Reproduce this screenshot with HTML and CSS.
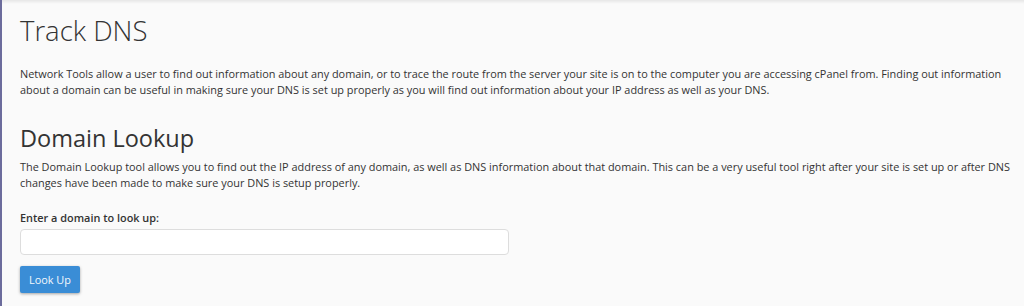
FILE: index.html
```html
<!DOCTYPE html>
<html lang="en">
<head>
    <meta charset="UTF-8">
    <meta name="viewport" content="width=device-width, initial-scale=1.0">
    <title>Track DNS</title>
    <link rel="stylesheet" href="styles.css">
</head>
<body>

    <div class="page">
        <!-- Page Header -->
        <h1 class="page-title">Track DNS</h1>
        <p class="intro">Network Tools allow a user to find out information about any domain, or to trace the route from the server your site is on to the computer you are accessing cPanel from. Finding out information about a domain can be useful in making sure your DNS is set up properly as you will find out information about your IP address as well as your DNS.</p>

        <!-- Domain Lookup -->
        <section class="lookup">
            <h2 class="section-title">Domain Lookup</h2>
            <p class="section-desc">The Domain Lookup tool allows you to find out the IP address of any domain, as well as DNS information about that domain. This can be a very useful tool right after your site is set up or after DNS changes have been made to make sure your DNS is setup properly.</p>

            <form class="lookup-form" onsubmit="return false;">
                <label class="field-label" for="domain">Enter a domain to look up:</label>
                <input class="field-input" type="text" id="domain">
                <button class="btn-primary" type="submit">Look Up</button>
            </form>
        </section>
    </div>

</body>
</html>
```

FILE: styles.css
```css
/* Base Reset */
* {
    margin: 0;
    padding: 0;
    box-sizing: border-box;
    font-family: 'Open Sans', 'Liberation Sans', sans-serif;
}

/* Body Styling */
body {
    background-color: #fafafa;
    color: #333;
    font-size: 10.9px;
    line-height: 16px;
    min-height: 100vh;
    border-left: 2px solid #6c6c9c;
    box-shadow: inset 0 4px 3px -2px rgba(0, 0, 0, 0.08);
}

/* Main Container */
.page {
    padding: 15px 10px 0 18px;
}

/* Page Header */
.page-title {
    font-size: 27.5px;
    font-weight: 300;
    line-height: 31px;
    color: #333;
    margin-bottom: 20px;
}

.intro {
    margin-bottom: 26px;
}

/* Domain Lookup Section */
.section-title {
    font-size: 23.5px;
    font-weight: 400;
    line-height: 28px;
    color: #333;
    margin-bottom: 7px;
}

.section-desc {
    margin-bottom: 19px;
}

.lookup-form {
    display: flex;
    flex-direction: column;
    align-items: flex-start;
}

.field-label {
    font-weight: 600;
    margin-bottom: 3px;
}

.field-input {
    width: 489px;
    height: 26px;
    border: 1px solid #ddd;
    border-radius: 4px;
    background-color: #fff;
    padding: 4px 8px;
    font-size: 11px;
    margin-bottom: 11px;
}

.btn-primary {
    background-color: #3a8dd6;
    color: #f4f8fc;
    border: none;
    border-radius: 2px;
    height: 27px;
    padding: 0 9px;
    font-size: 10.9px;
    box-shadow: 0 1px 3px rgba(0, 0, 0, 0.35);
    cursor: pointer;
}

.btn-primary:hover {
    background-color: #2f7cc0;
}
```
